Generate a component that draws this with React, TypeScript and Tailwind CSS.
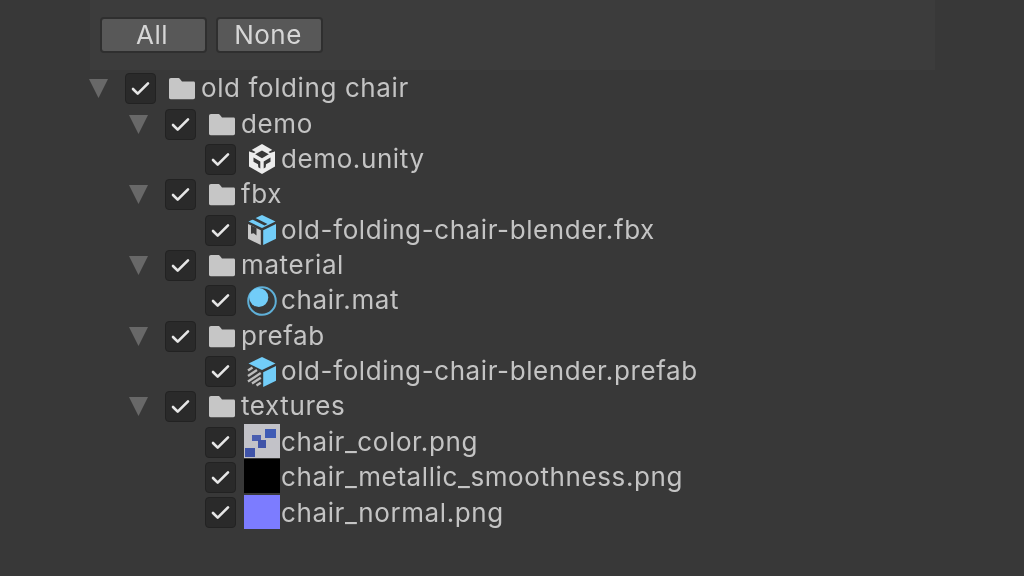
import type { ReactNode } from 'react';

type Row = {
  name: string;
  depth: 0 | 1 | 2;
  icon: ReactNode;
};

const FolderIcon = () => (
  <svg viewBox="0 0 28 23" className="w-[28px] h-[23px]">
    <path
      d="M1 3C1 1.800 1.800 1 3 1h7c1 0 1.600.4 2.200 1.200L14 4.500h11.500c1 0 1.500.7 1.500 1.700V20.500c0 1-.7 1.700-1.700 1.700H2.700C1.700 22.200 1 21.500 1 20.500z"
      fill="#c6c6c6"
    />
  </svg>
);

const UnityIcon = () => (
  <svg viewBox="0 0 30 30" className="w-[30px] h-[30px] ml-[3px]">
    <path d="M15 0l13 7.500v15L15 30 2 22.500v-15z" fill="#ececec" />
    <path d="M15 6.500l6.800 3.800L15 14.200l-6.800-3.900z" fill="#383838" />
    <path d="M6.500 13.500l6.800 3.900v7.100l-2-1.200-.3-3-4.500-2.600z" fill="#383838" />
    <path d="M23.500 13.500l-6.800 3.900v7.100l2-1.200.3-3 4.500-2.600z" fill="#383838" />
    <path d="M4 5.500l4.500 2.500-1.500 1-4.800-1.500z" fill="#383838" />
    <path d="M26 5.500l-4.500 2.500 1.500 1 4.800-1.500z" fill="#383838" />
  </svg>
);

const MeshIcon = () => (
  <svg viewBox="0 0 30 30" className="w-[30px] h-[30px] ml-[3px]">
    <path d="M15 0l13.500 6.500L15 13 1.500 6.500z" fill="#72cdf8" />
    <path d="M7 2.200l13.500 6.800-3 1.500L4 3.700z" fill="#383838" />
    <path d="M1 9l12.800 6.200V30L1 23.800z" fill="#c8c8c8" />
    <path d="M4 10.500l5.500 2.600v7.400l-2.700-2.200-2.800.4z" fill="#383838" />
    <path d="M16.200 15.200L29 9v14.800L16.200 30z" fill="#72cdf8" />
  </svg>
);

const PrefabIcon = () => (
  <svg viewBox="0 0 30 30" className="w-[30px] h-[30px] ml-[3px]">
    <path d="M15 0l13.500 6.500L15 13 1.500 6.500z" fill="#72cdf8" />
    <path d="M16.200 15.200L29 9v14.800L16.200 30z" fill="#72cdf8" />
    <path
      d="M1 13.500l4.500-3M1 19l9-6M1 24.500l12.800-8.500M5 26.500l8.800-5.800M9.500 28.500l4.300-2.800"
      stroke="#bcbcbc"
      strokeWidth="2.400"
      fill="none"
    />
  </svg>
);

const MaterialIcon = () => (
  <svg viewBox="0 0 30 30" className="w-[30px] h-[30px] ml-[3px]">
    <circle cx="15" cy="15" r="13.800" fill="none" stroke="#5fb0d8" strokeWidth="2" />
    <circle cx="11.800" cy="11.500" r="9.500" fill="#72cdf8" />
  </svg>
);

const ColorTexture = () => (
  <div className="relative w-[36px] h-[34px] mb-[3px] bg-[#c2c2c8] overflow-hidden">
    <div className="absolute left-[1px] top-[24px] w-[10px] h-[9px] bg-[#3f53a8]" />
    <div className="absolute left-[8px] top-[11px] w-[9px] h-[6px] bg-[#4a5eb0]" />
    <div className="absolute left-[14px] top-[16px] w-[8px] h-[8px] bg-[#3f53a8]" />
    <div className="absolute left-[21px] top-[5px] w-[11px] h-[9px] bg-[#3f5bb5]" />
  </div>
);

const rows: Row[] = [
  { name: 'old folding chair', depth: 0, icon: <FolderIcon /> },
  { name: 'demo', depth: 1, icon: <FolderIcon /> },
  { name: 'demo.unity', depth: 2, icon: <UnityIcon /> },
  { name: 'fbx', depth: 1, icon: <FolderIcon /> },
  { name: 'old-folding-chair-blender.fbx', depth: 2, icon: <MeshIcon /> },
  { name: 'material', depth: 1, icon: <FolderIcon /> },
  { name: 'chair.mat', depth: 2, icon: <MaterialIcon /> },
  { name: 'prefab', depth: 1, icon: <FolderIcon /> },
  { name: 'old-folding-chair-blender.prefab', depth: 2, icon: <PrefabIcon /> },
  { name: 'textures', depth: 1, icon: <FolderIcon /> },
  { name: 'chair_color.png', depth: 2, icon: <ColorTexture /> },
  {
    name: 'chair_metallic_smoothness.png',
    depth: 2,
    icon: <div className="w-[36px] h-[34px] mb-[3px] bg-black" />,
  },
  {
    name: 'chair_normal.png',
    depth: 2,
    icon: <div className="w-[36px] h-[34px] mb-[3px] bg-[#7c7cff]" />,
  },
];

const indent = { 0: 'pl-[89px]', 1: 'pl-[129px]', 2: 'pl-[205px]' };

const Checkbox = () => (
  <div className="w-[31px] h-[31px] rounded-[4px] bg-[#2a2a2a] border border-[#222222] flex items-center justify-center">
    <svg viewBox="0 0 20 16" className="w-[19px] h-[15px]">
      <path
        d="M2 8.500l5 5L18 2.500"
        fill="none"
        stroke="#e6e6e6"
        strokeWidth="2.800"
        strokeLinecap="round"
        strokeLinejoin="round"
      />
    </svg>
  </div>
);

const Caret = () => (
  <svg viewBox="0 0 19 19" className="w-[19px] h-[19px] mr-[17px]">
    <path d="M0 0h19L9.500 19z" fill="#686868" />
  </svg>
);

const Btn = ({ label }: { label: string }) => (
  <button className="w-[107px] h-[36px] pr-[3px] rounded-[4px] bg-[#585858] border-2 border-[#2f2f2f] text-[#d6d6d6] text-[26px] tracking-[0.5px] leading-none flex items-center justify-center">
    {label}
  </button>
);

export default function App() {
  return (
    <div className="w-[1024px] h-[576px] overflow-hidden bg-[#383838] font-['Inter',sans-serif] blur-[0.5px]">
      <div className="ml-[90px] w-[845px] h-[70px] bg-[#3c3c3c] pl-[10px] pt-[17px] flex items-start gap-[9px]">
        <Btn label="All" />
        <Btn label="None" />
      </div>
      <div className="pt-[1px] flex flex-col">
        {rows.map((row) => (
          <div
            key={row.name}
            className={`h-[35.37px] flex items-center text-[26px] tracking-[0.6px] text-[#c4c4c4] ${indent[row.depth]}`}
          >
            {row.depth < 2 && <Caret />}
            <Checkbox />
            <div
              className={
                row.depth === 2
                  ? 'w-[45px] pl-[8px] flex items-center'
                  : 'w-[45px] pl-[12px] flex items-center'
              }
            >
              {row.icon}
            </div>
            <span className="whitespace-nowrap mb-[2px]">{row.name}</span>
          </div>
        ))}
      </div>
    </div>
  );
}
